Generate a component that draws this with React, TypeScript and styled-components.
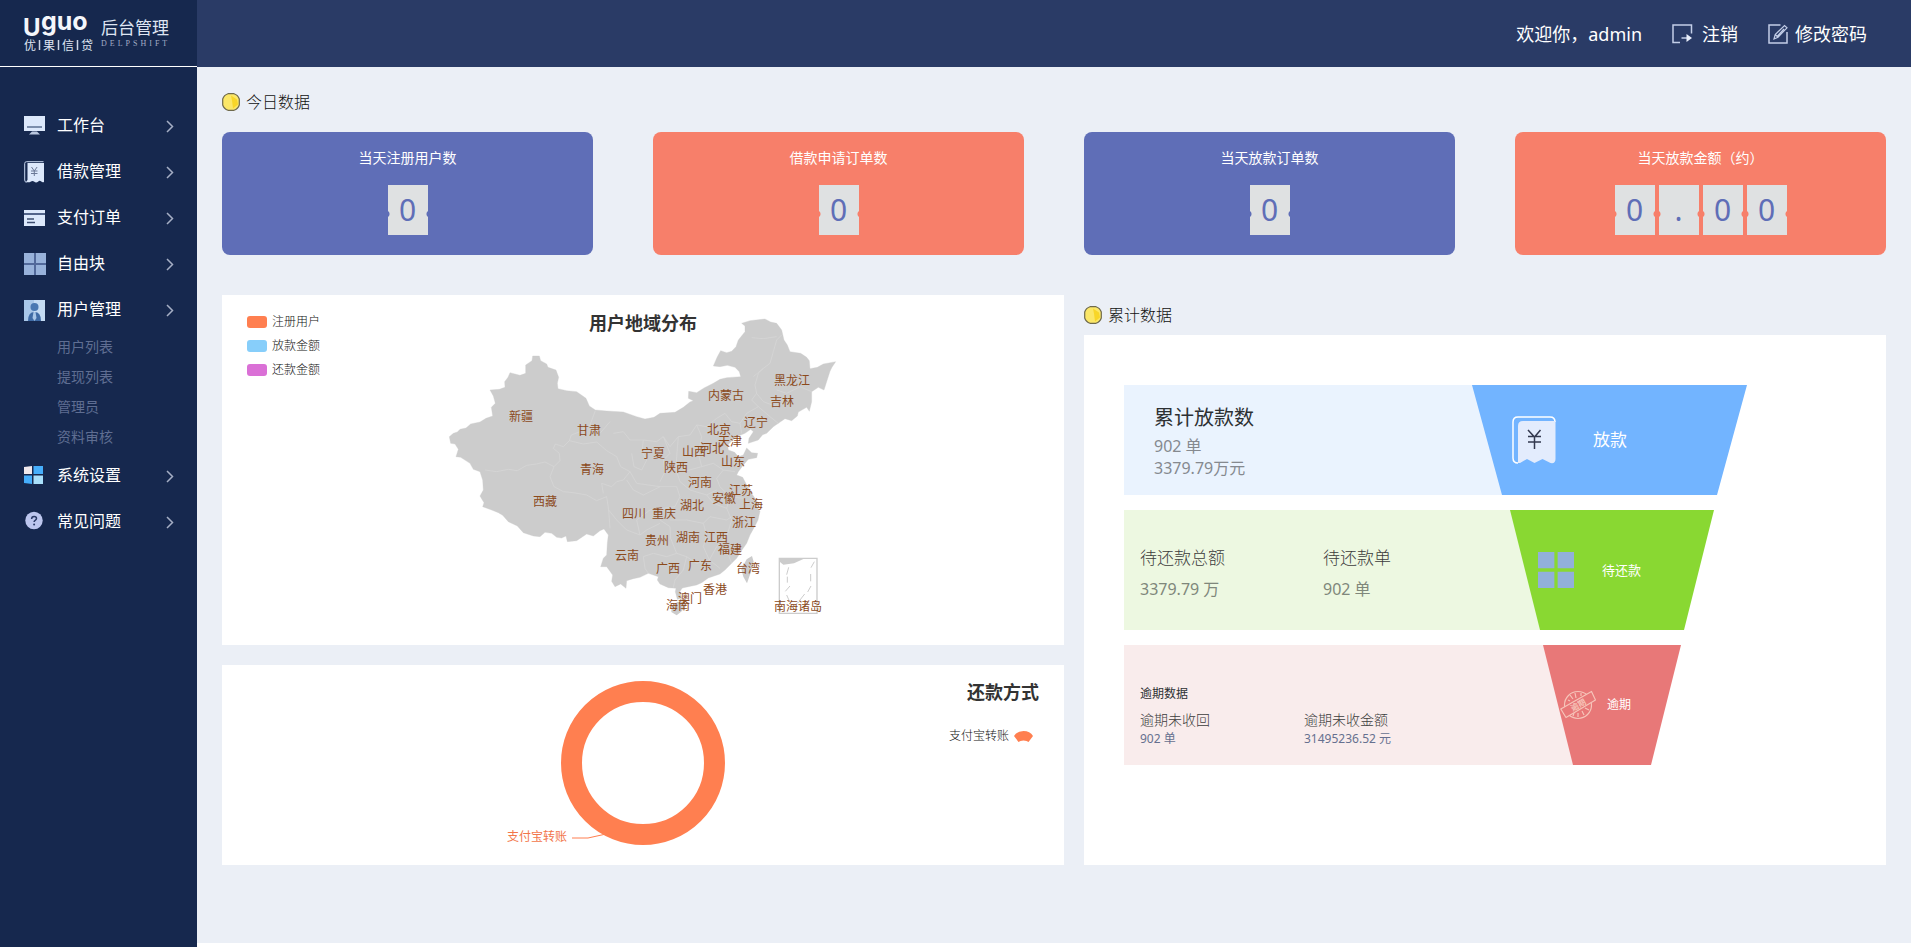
import React from 'react';
import styled, { createGlobalStyle } from 'styled-components';

const GlobalStyle = createGlobalStyle`
  *, *::before, *::after { box-sizing: border-box; }
  body {
    margin: 0;
    background: #ffffff;
    color: #333333;
    font-family: "Noto Sans", "Noto Sans CJK SC", sans-serif;
    font-size: 14px;
  }
  h1, h2, h3, p, ul, dl, dd { margin: 0; padding: 0; }
  ul { list-style: none; }
  a { color: inherit; text-decoration: none; }
`;

/* ---------- shell ---------- */

const Shell = styled.div`
  display: flex;
  min-height: 100vh;
`;

const Sidebar = styled.aside`
  flex: 0 0 197px;
  background: #16284e;
  color: #ffffff;
`;

const Brand = styled.div`
  display: flex;
  gap: 8px;
  height: 67px;
  padding: 17px 0 0 24px;
  border-bottom: 1px solid #ffffff;
`;

const BrandMarkSvg = styled.svg`
  overflow: visible;
`;

const BrandTitle = styled.div`
  padding-top: 1px;
  color: #dfe5f2;
`;

const BrandName = styled.h1`
  font-size: 17px;
  line-height: 20px;
  font-weight: 400;
`;

const BrandSub = styled.p`
  font-family: "Liberation Serif", serif;
  font-size: 8px;
  line-height: 12px;
  letter-spacing: 3px;
  color: #a3adc6;
`;

const Column = styled.div`
  flex: 1;
  min-width: 0;
  display: flex;
  flex-direction: column;
`;

const TopBar = styled.header`
  display: flex;
  align-items: center;
  justify-content: flex-end;
  gap: 30px;
  height: 67px;
  padding-right: 44px;
  background: #2a3b66;
  color: #ffffff;
  font-size: 18px;
  line-height: 24px;
`;

const TopButton = styled.button`
  display: flex;
  align-items: center;
  gap: 7px;
  padding: 0;
  border: 0;
  background: none;
  color: inherit;
  font: inherit;
  cursor: pointer;
`;

const Main = styled.main`
  flex: 1;
  margin-bottom: 4px;
  padding: 26px 25px 40px;
  background: #ebeff6;
`;

/* ---------- menu ---------- */

const Menu = styled.nav`
  padding-top: 36px;
`;

const MenuLink = styled.a`
  display: flex;
  align-items: center;
  height: 46px;
  padding: 0 23px 0 24px;
  font-size: 16px;
  line-height: 24px;
`;

const MenuIcon = styled.span`
  display: flex;
  flex: 0 0 33px;
`;

const MenuText = styled.span`
  flex: 1;
  padding-bottom: 2px;
`;

const SubLink = styled.a`
  display: block;
  padding: 0 0 2px 57px;
  font-size: 14px;
  line-height: 28px;
  color: #5f6e92;
`;

/* ---------- statistics ---------- */

const SectionTitle = styled.h2`
  display: flex;
  align-items: center;
  gap: 6px;
  height: 18px;
  color: #111111;
  font-size: 16px;
  line-height: 18px;
  font-weight: 300;
`;

const StatGrid = styled.div`
  display: grid;
  grid-template-columns: repeat(4, minmax(0, 1fr));
  gap: 60px;
  margin: 21px 0 40px;
`;

const StatCard = styled.section<{ $color: string }>`
  display: flex;
  flex-direction: column;
  align-items: center;
  gap: 17px;
  padding: 16px 0 20px;
  border-radius: 8px;
  background: ${(p) => p.$color};
`;

const StatLabel = styled.h3`
  color: #ffffff;
  font-size: 14px;
  line-height: 20px;
  font-weight: 400;
`;

const Digits = styled.div`
  display: flex;
  gap: 4px;
`;

const Digit = styled.span<{ $notch: string }>`
  width: 40px;
  height: 50px;
  background:
    radial-gradient(circle at -2px 29px, ${(p) => p.$notch} 3px, transparent 4px),
    radial-gradient(circle at 42px 29px, ${(p) => p.$notch} 3px, transparent 4px),
    #dfe1e2;
  color: #5f6eb7;
  font-size: 30px;
  line-height: 50px;
  text-align: center;
`;

/* ---------- panels ---------- */

const Dashboard = styled.div`
  display: grid;
  grid-template-columns: minmax(0, 842fr) minmax(0, 802fr);
  gap: 20px;
`;

const Stack = styled.div`
  display: flex;
  flex-direction: column;
  gap: 20px;
`;

const TotalColumn = styled.div`
  display: flex;
  flex-direction: column;
  gap: 11px;
  padding-top: 11px;
`;

const Panel = styled.section`
  background: #ffffff;
`;

const LayeredPanel = styled(Panel)<{ $height: number }>`
  display: grid;
  height: ${(p) => p.$height}px;
  > * { grid-area: 1 / 1; }
`;

const PanelTitle = styled.h2`
  font-size: 18px;
  line-height: 24px;
  font-weight: 700;
`;

const MapTitle = styled(PanelTitle)`
  justify-self: center;
  align-self: start;
  padding-top: 16px;
  z-index: 1;
`;

const MapLegend = styled.ul`
  justify-self: start;
  padding: 15px 0 0 25px;
`;

const LegendRow = styled.li`
  display: flex;
  align-items: center;
  gap: 5px;
  color: #111111;
  font-size: 12px;
  line-height: 24px;
  font-weight: 300;
`;

const Swatch = styled.span<{ $color: string }>`
  width: 20px;
  height: 12px;
  border-radius: 3px;
  background: ${(p) => p.$color};
`;

const ChartSvg = styled.svg`
  justify-self: center;
  font-size: 12px;
`;

const PieSide = styled.div`
  justify-self: end;
  display: flex;
  flex-direction: column;
  align-items: flex-end;
  gap: 20px;
  padding: 15px 25px 0 0;
`;

const PieLegend = styled(LegendRow).attrs({ as: 'div' })`
  padding-right: 6px;
`;

/* ---------- funnel ---------- */

const FunnelPanel = styled(Panel)`
  flex: 1;
  display: flex;
  flex-direction: column;
  gap: 15px;
  padding: 50px 40px;
`;

const FunnelRow = styled.section<{ $height: number }>`
  display: flex;
  height: ${(p) => p.$height}px;
`;

const FunnelInfo = styled.div<{ $width: number; $bg: string; $pad: string }>`
  flex: 0 0 ${(p) => p.$width}px;
  padding: ${(p) => p.$pad};
  background: ${(p) => p.$bg};
`;

const FunnelShape = styled.div<{ $width: number; $color: string; $pad: number; $gap: number }>`
  display: flex;
  align-items: center;
  flex: 0 0 ${(p) => p.$width}px;
  gap: ${(p) => p.$gap}px;
  margin-left: -30px;
  padding-left: ${(p) => p.$pad}px;
  background: ${(p) => p.$color};
  clip-path: polygon(0 0, 100% 0, calc(100% - 30px) 100%, 30px 100%);
`;

const FunnelLabel = styled.h3<{ $size: number }>`
  color: #ffffff;
  font-size: ${(p) => p.$size}px;
  line-height: 24px;
  font-weight: 400;
`;

const FactColumns = styled.dl<{ $first: number }>`
  display: grid;
  grid-template-columns: ${(p) => p.$first}px 1fr;
`;

const InfoTitle = styled.h3<{ $size: number; $line: number }>`
  font-size: ${(p) => p.$size}px;
  line-height: ${(p) => p.$line}px;
  font-weight: 400;
  color: #2d3033;
`;

const InfoValue = styled.p`
  font-size: 16px;
  line-height: 22px;
  color: #85898f;
`;

const FactTerm = styled.dt<{ $size: number; $line: number }>`
  font-size: ${(p) => p.$size}px;
  line-height: ${(p) => p.$line}px;
  font-weight: 300;
  color: #3c3c3c;
`;

const FactValue = styled.dd<{ $size: number; $line: number; $color: string }>`
  font-size: ${(p) => p.$size}px;
  line-height: ${(p) => p.$line}px;
  color: ${(p) => p.$color};
`;

/* ---------- icons ---------- */

const BrandMark = () => (
  <BrandMarkSvg width="69" height="38" viewBox="0 0 69 38" fill="#f4f6fb" fontFamily='"Noto Sans CJK SC", sans-serif' aria-label="优果信贷">
    <g fontFamily="Inter, sans-serif" fontWeight="700">
      <text x="-1" y="19" fontSize="24">U</text>
      <text x="17" y="13" fontSize="25">guo</text>
    </g>
    <g fontSize="12" fill="#dfe5f2">
      <text x="0" y="33">优</text>
      <text x="19" y="33">果</text>
      <text x="38" y="33">信</text>
      <text x="57" y="33">贷</text>
      <path d="M15.500 23v10M34.500 23v10M53.500 23v10" stroke="#cdd5e6" strokeWidth="1.500" />
    </g>
  </BrandMarkSvg>
);

const DeskIcon = () => (
  <svg width="21" height="20" viewBox="0 0 21 20">
    <path d="M0 0h21v15H0z" fill="#dce8fb" />
    <path d="M3 11h15" stroke="#5d7092" strokeWidth="1.500" />
    <path d="M8 15.500h5l3 3H5z" fill="#b9c6de" />
  </svg>
);

const BillIcon = () => (
  <svg width="21" height="22" viewBox="0 0 21 22">
    <path d="M2.500 21.500Q.7 21 .7 19V2.500Q.7 .7 2.500 .7H19.500" fill="none" stroke="#c6d5ee" />
    <path d="M3.500 2H20v19q-1.500 1-3-.8q-1.500-1-3 .5q-2 1.500-4-.2q-1.500-1.200-3.500.3q-1.500 1-4.500 0L3.500 19z" fill="#dce8fb" />
    <path d="M7.500 6l2.800 4l2.800-4M7 10h6.500M7 12.500h6.500M10.300 10v5" stroke="#6b7896" fill="none" />
  </svg>
);

const CardIcon = () => (
  <svg width="21" height="16" viewBox="0 0 21 16">
    <path d="M0 0h21v3H0zM0 5h21v11H0z" fill="#dce8fb" />
    <path d="M0 3h21v2H0z" fill="#52648a" />
    <path d="M3 9h7M3 12.500h8" stroke="#3d4d70" strokeWidth="1.500" />
  </svg>
);

const BlocksIcon = ({ size = 22, color = '#98b2da', cross = 'none' }: { size?: number; color?: string; cross?: string }) => (
  <svg width={size} height={size} viewBox="0 0 22 22" fill={color}>
    <path d="M0 0h22v22H0z" fill={cross} />
    <path d="M0 0h10v10H0zM12 0h10v10H12zM0 12h10v10H0zM12 12h10v10H12z" />
  </svg>
);

const PersonIcon = () => (
  <svg width="21" height="21" viewBox="0 0 21 21">
    <path d="M0 0h21v21H0z" fill="#c4dbf3" />
    <path d="M0 0h10v21H0z" fill="#a9c7e8" />
    <circle cx="10.500" cy="7" r="4" fill="#4a78b2" />
    <path d="M4 21q0-9 6.500-9t6.500 9z" fill="#3f6ba5" />
    <path d="M9.500 12h2l1 6l-2 3l-2-3z" fill="#a9c7e8" />
  </svg>
);

const SettingsIcon = () => (
  <svg width="19" height="20" viewBox="0 0 19 20">
    <path d="M0 1l8-1v8H0z" fill="#f1e9ec" />
    <path d="M9.500 0H19v8H9.500zM0 9.500h8V18l-8-1z" fill="#46aefb" />
    <path d="M9.500 9.500H19V18H9.500z" fill="#a9e0fb" />
  </svg>
);

const HelpIcon = () => (
  <svg width="20" height="22" viewBox="0 0 20 22">
    <circle cx="10" cy="9.500" r="8.700" fill="#bcc6ee" />
    <path d="M7.600 8q0-2.600 2.500-2.600q2.400 0 2.400 2.100q0 1-1.300 1.800q-1.100.7-1.100 1.800" fill="none" stroke="#2a3a66" strokeWidth="1.500" />
    <circle cx="10.100" cy="13.600" r="1" fill="#2a3a66" />
  </svg>
);

const Chevron = () => (
  <svg width="8" height="13" viewBox="0 0 8 13" fill="none" stroke="#a5aec4" strokeWidth="1.500">
    <path d="M1 1l5.500 5.500L1 12" />
  </svg>
);

const LogoutIcon = () => (
  <svg width="23" height="20" viewBox="0 0 23 20" fill="none" stroke="#c3cee8" strokeWidth="1.500">
    <path d="M8 18.500H1V1h18.500v8.500M9.500 14h8" />
    <path d="M14.500 10l5.500 4l-5.500 4z" fill="#e9effb" stroke="none" />
  </svg>
);

const EditIcon = () => (
  <svg width="20" height="20" viewBox="0 0 20 20" fill="none" stroke="#c3cee8" strokeWidth="1.500">
    <path d="M12.500 1H1v18h18V8" />
    <path d="M6 15l1.200-4.500L16.500 1.500l2.500 2.300L10 13.200zM7.200 10.500l2.800 2.700M9.500 12l6.500-7" strokeWidth="1.200" />
  </svg>
);

const CoinIcon = () => (
  <svg width="18" height="18" viewBox="0 0 18 18">
    <path d="M6 .7h6q4 1.300 5.300 5.300v6q-1.300 4-5.300 5.300H6Q2 16 .7 12V6Q2 2 6 .7z" fill="#fbe768" stroke="#6f6a4c" strokeWidth="1.200" />
    <path d="M9 2.500l6 4l1 5l-5 4l-1-8z" fill="#f8d628" />
  </svg>
);

const LoanIcon = () => (
  <svg width="44" height="48" viewBox="0 0 44 48">
    <path d="M6 47Q1 47 1 42V6Q1 1 6 1h32q5 0 5 5" fill="none" stroke="#ffffff" strokeWidth="1.500" />
    <path d="M6 10Q6 5 11 5h32.500v38q0 5-5 4l-8-4l-8 4l-7.500-4l-7 4H6z" fill="#e3ecfd" />
    <path d="M16 14l6.500 7l6-7M16 20.500h13M16 26h13M22.500 20.500V33" fill="none" stroke="#33394f" strokeWidth="1.500" />
  </svg>
);

const StampIcon = () => (
  <svg width="36" height="30" viewBox="0 0 36 30" fill="none" stroke="#f6c4b9" strokeWidth="1.200">
    <circle cx="18" cy="15" r="13.500" />
    <path d="M8 10l2 1M10 5l3 4M15 3l1 5M21 3v3M18 27v-4M24 25l-2-4M29 20l-4-2M13 26l1-3" />
    <path d="M.8 19L31.500 1.500l4 8.500L6 27.500z" fill="#e87878" strokeLinejoin="round" />
    <g transform="rotate(-30 18 14.500)">
      <text x="18" y="18" textAnchor="middle" fontSize="8" fontWeight="700" fill="#f6c4b9" stroke="none" fontFamily='"Noto Sans CJK SC", sans-serif'>逾期</text>
    </g>
  </svg>
);

/* ---------- map ---------- */

const provinces: Array<[string, number, number]> = [
  ['黑龙江', 362, 90], ['内蒙古', 296, 105], ['吉林', 352, 111], ['新疆', 91, 126],
  ['甘肃', 159, 140], ['辽宁', 326, 132], ['北京', 289, 139], ['天津', 300, 151],
  ['河北', 282, 158], ['山西', 264, 161], ['宁夏', 223, 163], ['山东', 303, 171],
  ['陕西', 246, 177], ['青海', 162, 179], ['河南', 270, 192], ['江苏', 311, 200],
  ['安徽', 294, 208], ['西藏', 115, 211], ['上海', 321, 214], ['湖北', 262, 215],
  ['四川', 204, 223], ['重庆', 234, 223], ['浙江', 314, 232], ['贵州', 227, 250],
  ['湖南', 258, 247], ['江西', 286, 247], ['福建', 300, 259], ['云南', 197, 265],
  ['广西', 238, 278], ['广东', 270, 275], ['台湾', 318, 278], ['香港', 285, 299],
  ['澳门', 260, 308], ['海南', 248, 315], ['南海诸岛', 368, 316],
];

const mainland =
  'M58 440L70 430L82 426L90 418L108 414L122 402L150 396L168 385L188 378L184 352L196 340L190 318L180 300L208 298L225 292L224 275L234 262L240 248L270 256L287 250L287 225L306 212L308 198L328 198L332 212L350 222L354 232L378 240L386 262L382 280L384 296L410 302L440 305L468 325L478 348L496 360L530 363L580 366L620 380L645 387L672 382L690 370L735 367L760 352L780 336L790 332L775 325L776 304L800 308L822 294L850 280L870 268L890 263L932 260L928 245L915 232L892 226L870 230L850 228L862 200L872 182L890 188L905 184L918 170L925 150L945 125L945 108L935 100L960 92L1005 87L1022 96L1040 100L1055 120L1062 150L1072 165L1080 185L1112 190L1130 202L1138 212L1140 236L1162 232L1180 222L1217 215L1206 232L1200 244L1190 275L1182 300L1165 292L1145 305L1145 335L1138 364L1130 352L1105 366L1102 378L1085 392L1065 386L1045 400L1030 410L1010 430L998 434L985 450L955 460L957 445L970 425L962 418L945 430L925 438L905 452L893 466L895 480L914 487L925 500L940 495L950 474L965 488L983 490L980 503L955 508L940 525L925 545L920 555L938 562L945 575L958 600L985 640L980 650L990 664L984 690L975 708L960 735L950 760L936 780L920 805L905 820L885 840L870 852L835 864L815 878L800 885L775 890L757 894L750 904L755 925L742 928L736 905L738 895L715 893L690 882L682 870L685 860L655 850L630 862L610 866L590 872L588 895L572 882L555 890L545 874L548 855L530 830L512 830L520 805L530 795L532 760L535 735L522 717L510 722L490 738L470 732L440 752L412 755L408 738L395 744L380 742L365 730L345 727L330 740L310 738L280 728L262 708L235 695L218 676L205 668L185 660L158 650L162 638L150 618L160 600L158 570L150 545L130 538L120 520L92 502L78 500L85 478L75 462L62 460Z';

const borders =
  'M165 540L200 545L235 538L262 542L290 526L320 522L345 516L372 530M372 530L390 512L388 490L370 475L376 462L400 470L418 452L424 435L450 425L480 405L496 362M372 530L360 560L372 590L400 605L430 608L470 615L500 632L530 620L536 660L540 715M418 452L460 462L500 456L530 482L560 500L572 530L600 545L580 570L560 575L545 590L515 580L520 610M480 405L510 430L540 395M550 430L580 425L600 450L640 450L636 485L650 510L635 540L612 530L605 490M640 450L680 455L700 440L720 470L745 440L780 435L800 405L830 410L860 385L885 370L905 395L930 400M700 440L720 490L700 510L705 545L690 575M745 440L740 500L738 540L750 575M800 405L815 440L805 490L815 530M815 530L760 545M815 530L850 520L880 540L860 565L870 590L900 620M880 540L915 545M750 575L780 600L830 615L860 600M600 545L620 580L690 590L740 590L750 620L735 650L700 655M590 570L610 600L640 615L690 590M536 660L560 690L590 720L630 735L620 690L660 660L700 655L690 690L720 710M630 735L650 720L690 700M720 710L722 745L740 790L710 800L670 790L640 800L645 835L655 850M720 690L770 690L820 700L840 680L890 690L905 680M820 700L830 735L820 770L838 810L800 820L770 800L740 790M900 620L890 655L905 690L930 700M905 690L890 740L860 770L838 810M838 810L870 835M905 820L890 780M770 800L760 840L735 870L730 893M900 620L940 625L975 650M830 615L850 640L890 655M1055 135L1040 150L1030 185L1020 220L1000 235L985 250L975 285L980 310L1000 335L1040 350L1060 340M965 143L1000 146L1040 140M980 310L965 330L985 350L950 370L930 400L935 430M1000 235L970 260M985 350L1020 380L1045 400M1040 300L1070 310L1110 290L1145 305';

const ChinaMap = () => (
  <ChartSvg width="420" height="345" viewBox="3 5 420 345" role="img" aria-label="用户地域分布">
    <g transform="scale(.33333)" fill="#cccccc">
      <path d={mainland} stroke="#cccccc" strokeWidth="1" strokeLinejoin="round" />
      <path d="M725 948L742 936L762 934L768 948L755 964L740 976L724 966ZM950 808L966 798L971 815L962 848L951 880L940 860L934 838Z" />
      <path d={borders} fill="none" stroke="#d8d8d8" strokeWidth="2" />
      <path d="M1048 805h113v165h-113z" fill="none" stroke="#cccccc" strokeWidth="4" />
      <path d="M1050 806h72l-30 14l-32 4l-10-8z" />
      <path d="M1153 815l-10 18M1142 852v22M1143 888l-10 18M1076 832l-6 22M1072 860v18M1080 888l-14 16M1070 915l8 18M1124 912l-14 18M1098 942l12-8" stroke="#cccccc" strokeWidth="3" />
    </g>
    <g fill="#8b4a1c" textAnchor="middle" dominantBaseline="central">
      {provinces.map(([name, x, y]) => (
        <text key={name} x={x} y={y}>{name}</text>
      ))}
    </g>
  </ChartSvg>
);

/* ---------- data ---------- */

const PURPLE = '#5f6eb7';
const CORAL = '#f77f6a';

const stats = [
  { label: '当天注册用户数', value: '0', color: PURPLE },
  { label: '借款申请订单数', value: '0', color: CORAL },
  { label: '当天放款订单数', value: '0', color: PURPLE },
  { label: '当天放款金额（约）', value: '0.00', color: CORAL },
];

const legend = [
  { label: '注册用户', color: '#ff7f50' },
  { label: '放款金额', color: '#87cefa' },
  { label: '还款金额', color: '#da70d6' },
];

const menu: Array<{ label: string; icon: React.ReactNode; children?: string[] }> = [
  { label: '工作台', icon: <DeskIcon /> },
  { label: '借款管理', icon: <BillIcon /> },
  { label: '支付订单', icon: <CardIcon /> },
  { label: '自由块', icon: <BlocksIcon cross="#52699a" /> },
  { label: '用户管理', icon: <PersonIcon />, children: ['用户列表', '提现列表', '管理员', '资料审核'] },
  { label: '系统设置', icon: <SettingsIcon /> },
  { label: '常见问题', icon: <HelpIcon /> },
];

export default function App() {
  return (
    <>
      <GlobalStyle />
      <Shell>
        <Sidebar>
          <Brand>
            <BrandMark />
            <BrandTitle>
              <BrandName>后台管理</BrandName>
              <BrandSub>DELPSHIFT</BrandSub>
            </BrandTitle>
          </Brand>
          <Menu>
            <ul>
              {menu.map((item) => (
                <li key={item.label}>
                  <MenuLink href="#">
                    <MenuIcon>{item.icon}</MenuIcon>
                    <MenuText>{item.label}</MenuText>
                    <Chevron />
                  </MenuLink>
                  {item.children && (
                    <ul>
                      {item.children.map((child) => (
                        <li key={child}><SubLink href="#">{child}</SubLink></li>
                      ))}
                    </ul>
                  )}
                </li>
              ))}
            </ul>
          </Menu>
        </Sidebar>

        <Column>
          <TopBar>
            <span>欢迎你，admin</span>
            <TopButton type="button"><LogoutIcon />注销</TopButton>
            <TopButton type="button"><EditIcon />修改密码</TopButton>
          </TopBar>

          <Main>
            <SectionTitle><CoinIcon />今日数据</SectionTitle>
            <StatGrid>
              {stats.map((stat) => (
                <StatCard key={stat.label} $color={stat.color}>
                  <StatLabel>{stat.label}</StatLabel>
                  <Digits>
                    {stat.value.split('').map((char, i) => (
                      <Digit key={i} $notch={stat.color}>{char}</Digit>
                    ))}
                  </Digits>
                </StatCard>
              ))}
            </StatGrid>

            <Dashboard>
              <Stack>
                <LayeredPanel $height={350}>
                  <MapLegend>
                    {legend.map((row) => (
                      <LegendRow key={row.label}><Swatch $color={row.color} />{row.label}</LegendRow>
                    ))}
                  </MapLegend>
                  <ChinaMap />
                  <MapTitle>用户地域分布</MapTitle>
                </LayeredPanel>

                <LayeredPanel $height={200}>
                  <ChartSvg width="280" height="200" viewBox="-140 0 280 200" role="img" aria-label="还款方式">
                    <circle cx="0" cy="98" r="71.500" fill="none" stroke="#ff7f50" strokeWidth="21" />
                    <path d="M-71 173h16l18-4" fill="none" stroke="#ff7f50" />
                    <text x="-136" y="171" fill="#f2764a" dominantBaseline="central">支付宝转账</text>
                  </ChartSvg>
                  <PieSide>
                    <PanelTitle>还款方式</PanelTitle>
                    <PieLegend>
                      支付宝转账
                      <svg width="19" height="12" viewBox="0 0 19 12">
                        <path d="M0 6Q3 1 9.500 1T19 6L14.500 12Q13 10.500 9.500 10.500T4.500 12z" fill="#ff7f50" />
                      </svg>
                    </PieLegend>
                  </PieSide>
                </LayeredPanel>
              </Stack>

              <TotalColumn>
                <SectionTitle><CoinIcon />累计数据</SectionTitle>
                <FunnelPanel>
                  <FunnelRow $height={110}>
                    <FunnelInfo $width={378} $bg="#eaf3fe" $pad="16px 30px">
                      <InfoTitle $size={20} $line={34}>累计放款数</InfoTitle>
                      <InfoValue>902 单</InfoValue>
                      <InfoValue>3379.79万元</InfoValue>
                    </FunnelInfo>
                    <FunnelShape $width={275} $color="#72b4ff" $pad={40} $gap={37}>
                      <LoanIcon />
                      <FunnelLabel $size={17}>放款</FunnelLabel>
                    </FunnelShape>
                  </FunnelRow>

                  <FunnelRow $height={120}>
                    <FunnelInfo $width={416} $bg="#edf8e1" $pad="32px 16px">
                      <FactColumns $first={183}>
                        <div>
                          <FactTerm $size={17} $line={32}>待还款总额</FactTerm>
                          <FactValue $size={16} $line={30} $color="#7f877b">3379.79 万</FactValue>
                        </div>
                        <div>
                          <FactTerm $size={17} $line={32}>待还款单</FactTerm>
                          <FactValue $size={16} $line={30} $color="#7f877b">902 单</FactValue>
                        </div>
                      </FactColumns>
                    </FunnelInfo>
                    <FunnelShape $width={204} $color="#89d832" $pad={28} $gap={28}>
                      <BlocksIcon size={36} color="#92b0da" />
                      <FunnelLabel $size={13}>待还款</FunnelLabel>
                    </FunnelShape>
                  </FunnelRow>

                  <FunnelRow $height={120}>
                    <FunnelInfo $width={449} $bg="#f9ecec" $pad="36px 16px">
                      <InfoTitle $size={12} $line={26}>逾期数据</InfoTitle>
                      <FactColumns $first={164}>
                        <div>
                          <FactTerm $size={14} $line={26}>逾期未收回</FactTerm>
                          <FactValue $size={12} $line={12} $color="#66708f">902 单</FactValue>
                        </div>
                        <div>
                          <FactTerm $size={14} $line={26}>逾期未收金额</FactTerm>
                          <FactValue $size={12} $line={12} $color="#66708f">31495236.52 元</FactValue>
                        </div>
                      </FactColumns>
                    </FunnelInfo>
                    <FunnelShape $width={138} $color="#e87878" $pad={17} $gap={11}>
                      <StampIcon />
                      <FunnelLabel $size={12}>逾期</FunnelLabel>
                    </FunnelShape>
                  </FunnelRow>
                </FunnelPanel>
              </TotalColumn>
            </Dashboard>
          </Main>
        </Column>
      </Shell>
    </>
  );
}
